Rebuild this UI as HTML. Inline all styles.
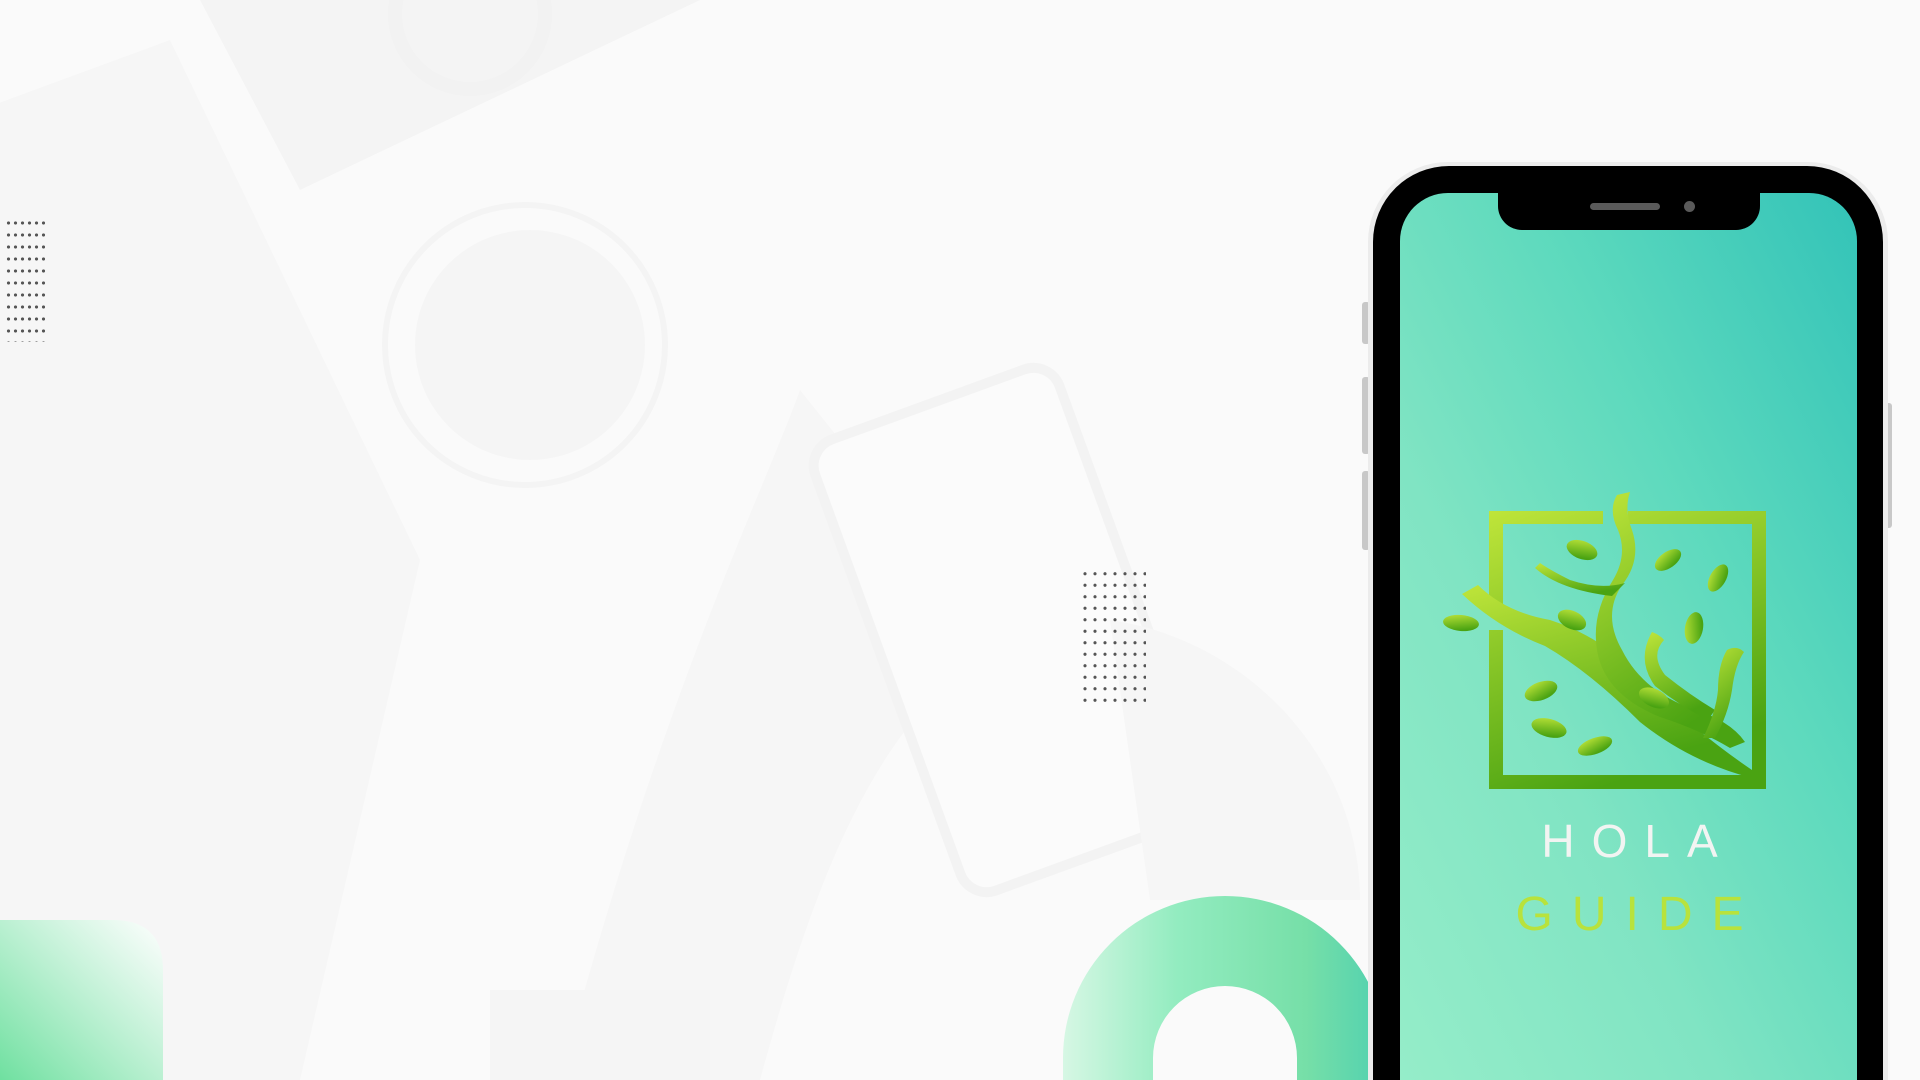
<!DOCTYPE html>
<html><head><meta charset="utf-8"><style>
html,body{margin:0;padding:0;overflow:hidden;width:1920px;height:1080px}
#w{width:1920px;height:1080px;position:relative;overflow:hidden;background:#fafafa;font-family:"Liberation Sans",sans-serif}
.abs{position:absolute}
</style></head><body><div id="w">
<svg class="abs" style="left:0;top:0" width="1920" height="1080" viewBox="0 0 1920 1080">
<defs>
<linearGradient id="sq" x1="1" y1="0" x2="0" y2="1"><stop offset="0" stop-color="#ffffff" stop-opacity="0.9"/><stop offset="1" stop-color="#6fe0a0"/></linearGradient>
<linearGradient id="ring" x1="0" y1="0" x2="1" y2="0"><stop offset="0" stop-color="#d6f7e4"/><stop offset="0.35" stop-color="#93ecc0"/><stop offset="0.75" stop-color="#76dfa8"/><stop offset="1" stop-color="#4fd0b0"/></linearGradient>
</defs>
<rect width="1920" height="1080" fill="#fafafa"/>
<g opacity="0.3">
<path d="M-20,110 L170,40 L420,560 L300,1080 L-20,1080Z" fill="#efefef"/>
<path d="M200,0 L700,0 L300,190Z" fill="#e8e8e8"/>
<circle cx="470" cy="14" r="75" fill="none" stroke="#e0e0e0" stroke-width="14"/>
<circle cx="525" cy="345" r="140" fill="#fbfbfb" stroke="#e8e8e8" stroke-width="6"/>
<circle cx="530" cy="345" r="115" fill="#ececec"/>
<path d="M800,390 C760,500 660,700 560,1080 L760,1080 C820,860 880,720 1000,640Z" fill="#f0eeee"/>
<rect x="880" y="390" width="260" height="480" rx="28" fill="#ffffff" stroke="#e6e6e6" stroke-width="10" transform="rotate(-20 1010 630)"/>
<path d="M1110,620 C1250,640 1360,760 1360,900 L1150,900Z" fill="#efefef"/>
<rect x="490" y="990" width="220" height="90" fill="#ececec"/>
</g>
<path d="M0,920 L113,920 Q163,920 163,970 L163,1080 L0,1080Z" fill="url(#sq)"/>
<path fill-rule="evenodd" fill="url(#ring)" d="M1063,1080 L1063,1058 A162,162 0 1 1 1387,1058 L1387,1080 L1297,1080 L1297,1058 A72,72 0 1 0 1153,1058 L1153,1080Z"/>
</svg>
<div class="abs" style="left:5px;top:217px;width:40px;height:125px;background-image:radial-gradient(circle,#555 1.4px,transparent 1.8px);background-size:7px 12px"></div>
<div class="abs" style="left:1080px;top:568px;width:66px;height:138px;background-image:radial-gradient(circle,#555 1.4px,transparent 1.8px);background-size:10px 11.5px"></div>
<div class="abs" style="left:1362px;top:302px;width:8px;height:42px;background:#c8c8c8;border-radius:3px"></div>
<div class="abs" style="left:1362px;top:377px;width:8px;height:77px;background:#c8c8c8;border-radius:3px"></div>
<div class="abs" style="left:1362px;top:471px;width:8px;height:79px;background:#c8c8c8;border-radius:3px"></div>
<div class="abs" style="left:1884px;top:403px;width:8px;height:125px;background:#c8c8c8;border-radius:3px"></div>
<div class="abs" style="left:1368px;top:162px;width:520px;height:918px;background:#ececec;border-radius:80px 80px 0 0"></div>
<div class="abs" style="left:1373px;top:166px;width:510px;height:914px;background:#000;border-radius:76px 76px 0 0"></div>
<div class="abs" style="left:1400px;top:193px;width:457px;height:887px;border-radius:48px 48px 0 0;background:linear-gradient(to bottom left,#33c3b8 0%,#5cd9bd 35%,#80e4c3 65%,#95edc9 100%)"></div>
<div class="abs" style="left:1498px;top:186px;width:262px;height:44px;background:#000;border-radius:0 0 24px 24px"></div>
<div class="abs" style="left:1590px;top:203px;width:70px;height:7px;background:#5a5a5a;border-radius:4px"></div>
<div class="abs" style="left:1684px;top:201px;width:11px;height:11px;background:#5a5a5a;border-radius:50%"></div>
<svg class="abs" style="left:0;top:0" width="1920" height="1080" viewBox="0 0 1920 1080">
<defs><linearGradient id="lg" x1="0" y1="0" x2="0.4" y2="1"><stop offset="0" stop-color="#bfe53a"/><stop offset="1" stop-color="#4aa312"/></linearGradient></defs>
<g fill="url(#lg)" stroke="none">
<path fill-rule="evenodd" d="M1489,511 L1603,511 L1603,524 L1503,524 L1503,607 L1489,607Z M1628,511 L1766,511 L1766,789 L1489,789 L1489,630 L1503,630 L1503,775 L1752,775 L1752,524 L1628,524Z"/>
<path d="M1462,594 L1478,585 Q1505,612 1550,620 Q1600,636 1640,676 Q1690,728 1752,770 L1752,778 Q1690,762 1640,722 Q1590,672 1545,646 Q1498,628 1462,594Z"/>
<path d="M1617,495 L1630,492 Q1624,510 1632,530 Q1642,560 1622,585 Q1602,615 1622,650 Q1642,690 1690,708 Q1730,720 1745,742 L1730,748 Q1700,730 1660,717 Q1598,692 1596,640 Q1594,610 1613,580 Q1628,555 1618,530 Q1608,510 1617,495Z"/>
<path d="M1535,568 Q1560,590 1612,596 L1625,583 Q1600,590 1570,580 Q1550,570 1540,563Z"/>
<path d="M1652,632 Q1660,635 1664,640 Q1650,655 1665,675 Q1690,695 1715,710 L1708,720 Q1680,706 1655,686 Q1636,660 1652,632Z"/>
<path d="M1727,650 Q1737,645 1744,652 Q1735,665 1732,690 Q1728,715 1715,738 L1703,738 Q1716,712 1718,690 Q1718,665 1727,650Z"/>
<ellipse cx="1461" cy="623" rx="18" ry="8" transform="rotate(5 1461 623)"/>
<ellipse cx="1582" cy="550" rx="16" ry="9" transform="rotate(20 1582 550)"/>
<ellipse cx="1572" cy="620" rx="15" ry="9" transform="rotate(25 1572 620)"/>
<ellipse cx="1668" cy="560" rx="15" ry="8" transform="rotate(-35 1668 560)"/>
<ellipse cx="1718" cy="578" rx="15" ry="8" transform="rotate(-60 1718 578)"/>
<ellipse cx="1694" cy="628" rx="16" ry="9" transform="rotate(-80 1694 628)"/>
<ellipse cx="1541" cy="691" rx="17" ry="9" transform="rotate(-20 1541 691)"/>
<ellipse cx="1549" cy="728" rx="18" ry="9" transform="rotate(15 1549 728)"/>
<ellipse cx="1595" cy="746" rx="18" ry="8" transform="rotate(-20 1595 746)"/>
<ellipse cx="1654" cy="698" rx="16" ry="9" transform="rotate(25 1654 698)"/>
</g>
<text x="1638" y="857" text-anchor="middle" font-family="Liberation Sans, sans-serif" font-size="46" fill="#f2f4f2" letter-spacing="17">HOLA</text>
<text x="1639" y="930" text-anchor="middle" font-family="Liberation Sans, sans-serif" font-size="48" fill="#b8e23c" letter-spacing="19">GUIDE</text>
</svg>
</div></body></html>
